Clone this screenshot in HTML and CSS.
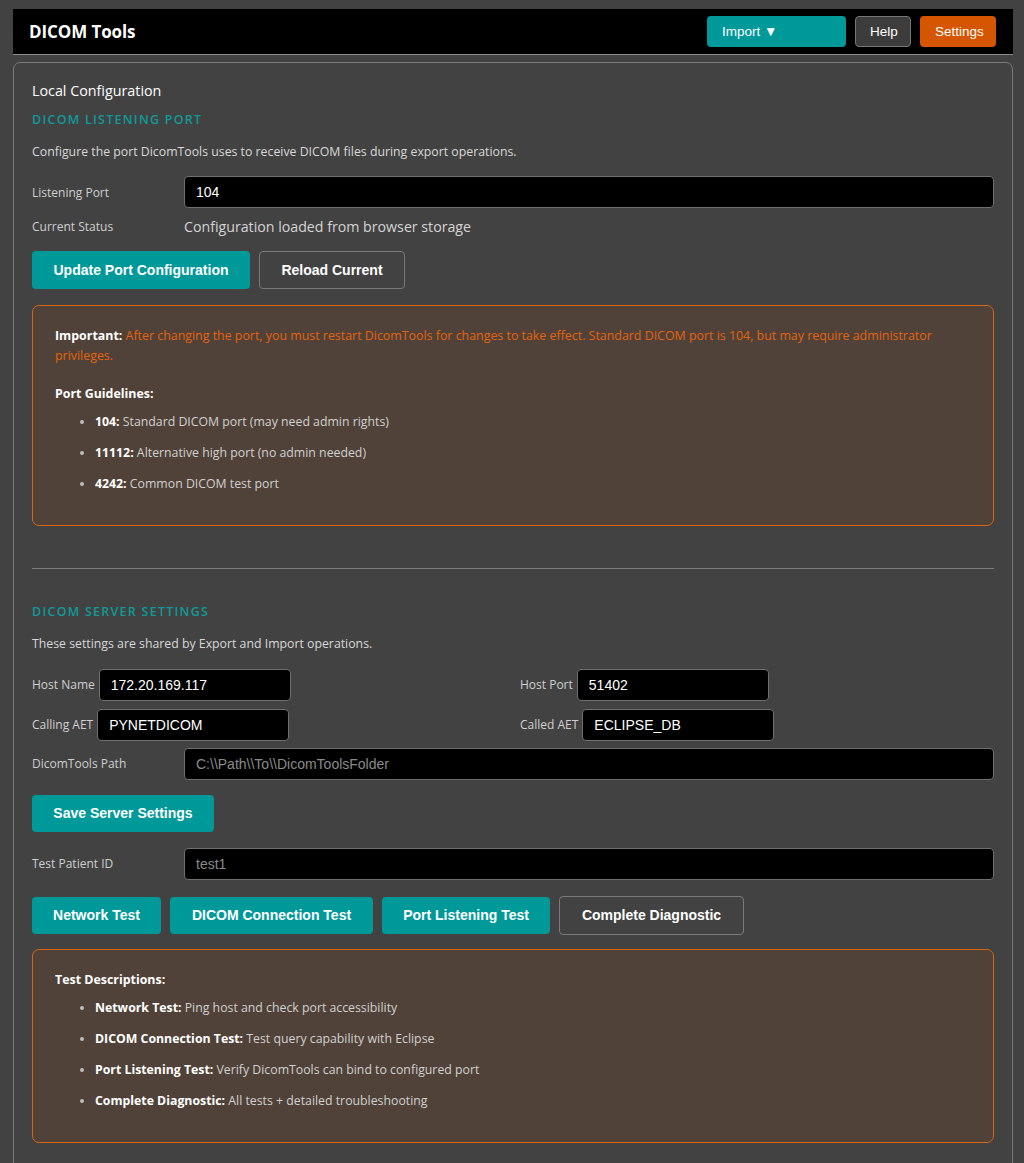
FILE: index.html
```html
<!DOCTYPE html>
<html lang="en">
<head>
<meta charset="utf-8">
<title>DICOM Tools</title>
<link rel="stylesheet" href="styles.css">
</head>
<body>
<div class="app">
  <header class="topbar">
    <h1 class="brand">DICOM Tools</h1>
    <nav class="nav">
      <button class="nav-btn nav-import">Import ▼</button>
      <button class="nav-btn nav-help">Help</button>
      <button class="nav-btn nav-settings">Settings</button>
    </nav>
  </header>

  <main class="card">
    <h2 class="card-title">Local Configuration</h2>

    <section class="section">
      <h3 class="section-title">DICOM LISTENING PORT</h3>
      <p class="section-desc">Configure the port DicomTools uses to receive DICOM files during export operations.</p>

      <div class="form-row">
        <label class="form-label">Listening Port</label>
        <input class="text-input" type="text" value="104">
      </div>
      <div class="form-row status-row">
        <span class="form-label">Current Status</span>
        <span class="status-value">Configuration loaded from browser storage</span>
      </div>

      <div class="btn-row">
        <button class="btn btn-primary btn-tall">Update Port Configuration</button>
        <button class="btn btn-outline btn-tall btn-reload">Reload Current</button>
      </div>

      <div class="note-box">
        <p class="note-warn"><strong>Important:</strong> After changing the port, you must restart DicomTools for changes to take effect. Standard DICOM port is 104, but may require administrator privileges.</p>
        <p class="note-heading gap-top"><strong>Port Guidelines:</strong></p>
        <ul class="note-list">
          <li><strong>104:</strong> Standard DICOM port (may need admin rights)</li>
          <li><strong>11112:</strong> Alternative high port (no admin needed)</li>
          <li><strong>4242:</strong> Common DICOM test port</li>
        </ul>
      </div>
    </section>

    <hr class="divider">

    <section class="section">
      <h3 class="section-title">DICOM SERVER SETTINGS</h3>
      <p class="section-desc">These settings are shared by Export and Import operations.</p>

      <div class="pair-grid">
        <div class="pair">
          <label class="pair-label">Host Name</label>
          <input class="text-input small-input" type="text" value="172.20.169.117">
        </div>
        <div class="pair">
          <label class="pair-label">Host Port</label>
          <input class="text-input small-input" type="text" value="51402">
        </div>
        <div class="pair">
          <label class="pair-label">Calling AET</label>
          <input class="text-input small-input" type="text" value="PYNETDICOM">
        </div>
        <div class="pair">
          <label class="pair-label">Called AET</label>
          <input class="text-input small-input" type="text" value="ECLIPSE_DB">
        </div>
      </div>

      <div class="form-row path-row">
        <label class="form-label">DicomTools Path</label>
        <input class="text-input" type="text" placeholder="C:\\Path\\To\\DicomToolsFolder">
      </div>

      <div class="btn-row save-row">
        <button class="btn btn-primary btn-mid btn-save">Save Server Settings</button>
      </div>

      <div class="form-row patient-row">
        <label class="form-label">Test Patient ID</label>
        <input class="text-input" type="text" placeholder="test1">
      </div>

      <div class="btn-row test-row">
        <button class="btn btn-primary btn-mid btn-net">Network Test</button>
        <button class="btn btn-primary btn-mid btn-dicom">DICOM Connection Test</button>
        <button class="btn btn-primary btn-mid btn-port">Port Listening Test</button>
        <button class="btn btn-outline btn-mid btn-diag">Complete Diagnostic</button>
      </div>

      <div class="note-box note-tests">
        <p class="note-heading"><strong>Test Descriptions:</strong></p>
        <ul class="note-list list-small">
          <li><strong>Network Test:</strong> Ping host and check port accessibility</li>
          <li><strong>DICOM Connection Test:</strong> Test query capability with Eclipse</li>
          <li><strong>Port Listening Test:</strong> Verify DicomTools can bind to configured port</li>
          <li><strong>Complete Diagnostic:</strong> All tests + detailed troubleshooting</li>
        </ul>
      </div>
    </section>
  </main>
</div>
</body>
</html>
```

FILE: styles.css
```css
* { box-sizing: border-box; }

html, body {
  margin: 0;
  padding: 0;
  background: #424242;
  color: #ffffff;
  font-family: "Open Sans", "Noto Sans", sans-serif;
}

.app {
  width: 1000px;
  margin: 9px 0 0 13px;
}

.topbar {
  height: 46px;
  background: #000;
  border-bottom: 1px solid #8a8a8a;
  display: flex;
  align-items: center;
  justify-content: space-between;
  padding: 0 17px 1px 16px;
}

.brand {
  margin: 0;
  font-size: 17px;
  font-weight: 700;
  color: #fff;
  letter-spacing: -0.1px;
}

.nav {
  display: flex;
  gap: 9px;
  align-items: center;
}

.nav-btn {
  height: 31px;
  border-radius: 4px;
  font-family: "Liberation Sans", Arial, sans-serif;
  font-size: 13.5px;
  color: #fff;
  border: 1px solid transparent;
  padding: 0 14px;
  cursor: pointer;
}

.nav-import {
  width: 139px;
  background: #009999;
  text-align: left;
  padding-left: 14px;
}

.nav-help {
  width: 56px;
  background: #3c3c3c;
  border-color: #777;
}

.nav-settings {
  width: 76px;
  background: #d65500;
}

.card {
  margin-top: 7px;
  border: 1px solid #7a7a7a;
  border-radius: 7px;
  padding: 18px 18px 20px 18px;
  min-height: 1110px;
}

.card-title {
  margin: 0;
  font-size: 14.3px;
  font-weight: 400;
  line-height: 20px;
  color: #fff;
}

.section-title {
  margin: 9px 0 0 0;
  font-size: 12.5px;
  font-weight: 600;
  letter-spacing: 1.25px;
  line-height: 20px;
  color: #0f9a98;
}

.section-desc {
  margin: 13px 0 0 0;
  font-size: 12.3px;
  line-height: 18px;
  color: #d8d8d8;
}

.form-row {
  display: flex;
  align-items: center;
  margin-top: 15px;
}

.form-label {
  width: 152px;
  flex: none;
  font-size: 12px;
  color: #cfcfcf;
}

.text-input {
  flex: 1;
  height: 32px;
  background: #000;
  border: 1px solid #6f6f6f;
  border-radius: 4px;
  color: #fff;
  font-family: "Liberation Sans", Arial, sans-serif;
  font-size: 14px;
  padding: 0 11px;
  outline: none;
}

.text-input::placeholder {
  color: #8a8a8a;
}

.status-row {
  margin-top: 8px;
  height: 20px;
}

.status-value {
  font-size: 14.2px;
  color: #d4d4d4;
}

.btn-row {
  display: flex;
  gap: 9px;
  align-items: center;
}

.status-row + .btn-row {
  margin-top: 15px;
}

.btn {
  font-family: "Liberation Sans", Arial, sans-serif;
  font-weight: 700;
  font-size: 14px;
  color: #fff;
  border-radius: 4px;
  border: 1px solid transparent;
  padding: 0 10px;
  cursor: pointer;
}

.btn-primary {
  background: #009999;
}

.btn-outline {
  background: transparent;
  border-color: #7a7a7a;
}

.btn-tall { height: 38px; }
.btn-mid { height: 37px; }

.btn-primary.btn-tall { width: 218px; }
.btn-reload { width: 146px; }

.note-box {
  margin-top: 16px;
  background: #504238;
  border: 1px solid #d8650f;
  border-radius: 7px;
  padding: 20px 22px 20px 22px;
}

.note-box p {
  margin: 0;
  font-size: 12.4px;
  line-height: 19.5px;
}

.note-warn {
  color: #e5620e;
}

.note-warn strong,
.note-heading strong {
  color: #fff;
  font-weight: 700;
}

.gap-top {
  margin-top: 19px !important;
}

.note-list {
  margin: 8px 0 0 0;
  padding-left: 40px;
  font-size: 12.3px;
  line-height: 20.5px;
  color: #d0d0d0;
}

.note-list li {
  margin-bottom: 10.5px;
}

.note-list li::marker {
  color: #bdbdbd;
}

.note-list strong {
  color: #fff;
  font-weight: 700;
}

.list-small {
  line-height: 20px;
  margin-top: 9px;
}

.list-small li {
  margin-bottom: 11px;
}

.divider {
  border: 0;
  border-top: 1px solid #7c7c7c;
  margin: 42px 0 33px 0;
}

.divider + .section .section-title {
  margin-top: 0;
}

.pair-grid {
  display: grid;
  grid-template-columns: 1fr 1fr;
  column-gap: 14px;
  row-gap: 8px;
  margin-top: 16px;
}

.pair {
  display: flex;
  align-items: center;
}

.pair-label {
  font-size: 12px;
  color: #cfcfcf;
  margin-right: 4px;
}

.small-input {
  flex: none;
  width: 192px;
}

.path-row {
  margin-top: 7px;
}

.save-row {
  margin-top: 15px;
}

.btn-save { width: 182px; }

.patient-row {
  margin-top: 16px;
}

.test-row {
  margin-top: 16px;
}

.btn-net { width: 129px; }
.btn-dicom { width: 203px; }
.btn-port { width: 168px; }
.btn-diag { width: 185px; height: 39px; }

.note-tests {
  margin-top: 14px;
}
```
